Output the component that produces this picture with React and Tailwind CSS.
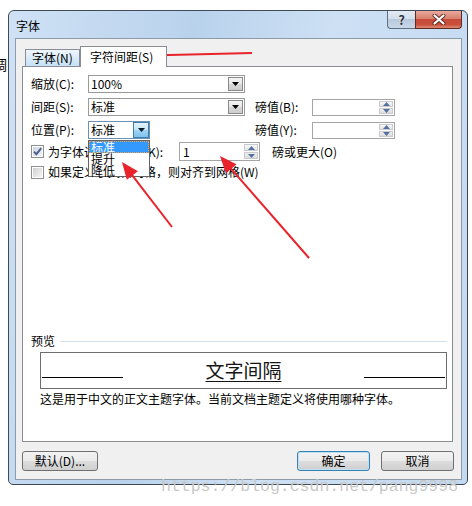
import React from "react";

function Tri({ dir = "down", color = "#000", w = 7, h = 4 }) {
  const pts = dir === "down" ? `0,0 ${w},0 ${w / 2},${h}` : `0,${h} ${w},${h} ${w / 2},0`;
  return (
    <svg width={w} height={h} viewBox={`0 0 ${w} ${h}`}>
      <polygon points={pts} fill={color} />
    </svg>
  );
}

function Combo({ wClass, value, active }) {
  return (
    <div className={`flex h-[18px] border bg-white ${wClass} ${active ? "border-[#6d8fb3]" : "border-[#9a9a9a]"}`}>
      <div className="flex-1 pl-[2px] leading-[16px] overflow-hidden whitespace-nowrap">{value}</div>
      {active ? (
        <div className="w-[16px] h-full border border-[#3c7fb1] bg-[linear-gradient(#e3f3fc,#c4e5f8_50%,#9fd4f3_51%,#7fc2ec)] flex items-center justify-center">
          <Tri color="#0d1a2a" />
        </div>
      ) : (
        <div className="w-[15px] m-[1px] border border-[#8a8a8a] bg-[linear-gradient(#f4f4f4,#e8e8e8_50%,#d8d8d8_51%,#cdcdcd)] flex items-center justify-center">
          <Tri color="#000" />
        </div>
      )}
    </div>
  );
}

function Spin({ wClass, hClass, value }) {
  return (
    <div className={`flex border border-[#a5a5a5] bg-white ${wClass} ${hClass}`}>
      <div className="flex-1 pl-[3px] flex items-center leading-[14px]">{value}</div>
      <div className="w-[14px] m-[1px] flex flex-col gap-[1px]">
        <div className="flex-1 border border-[#c9cbcf] bg-[linear-gradient(#f7f7f7,#e4e4e4)] flex items-center justify-center">
          <Tri dir="up" color="#5671a0" w={7} h={4} />
        </div>
        <div className="flex-1 border border-[#c9cbcf] bg-[linear-gradient(#f0f0f0,#dcdcdc)] flex items-center justify-center">
          <Tri dir="down" color="#5671a0" w={7} h={4} />
        </div>
      </div>
    </div>
  );
}

function Check({ checked }) {
  return (
    <div className="w-[13px] h-[13px] shrink-0 border border-[#8e8f8f] bg-white p-[1px]">
      <div className={`w-full h-full flex items-center justify-center ${checked ? "bg-[linear-gradient(135deg,#cfd6e2,#eef1f6)]" : "bg-[linear-gradient(135deg,#d0d0d0,#f6f6f6)]"}`}>
        {checked && (
          <svg width="9" height="9" viewBox="0 0 9 9">
            <path d="M1 4.6 L3.4 7.2 L8.2 1.2" stroke="#4b5f92" strokeWidth="1.9" fill="none" />
          </svg>
        )}
      </div>
    </div>
  );
}

function arrow(x1, y1, x2, y2, len = 17, half = 7) {
  const dx = x2 - x1;
  const dy = y2 - y1;
  const d = Math.hypot(dx, dy);
  const ux = dx / d;
  const uy = dy / d;
  const bx = x2 - ux * len;
  const by = y2 - uy * len;
  const px = -uy * half;
  const py = ux * half;
  return (
    <g key={`${x1}-${y1}`}>
      <line x1={x1} y1={y1} x2={bx + ux * 2} y2={by + uy * 2} stroke="#e8232b" strokeWidth="2" />
      <polygon points={`${x2},${y2} ${bx + px},${by + py} ${bx - px},${by - py}`} fill="#e8232b" />
    </g>
  );
}

export default function App() {
  const btn =
    "h-[20px] rounded-[3px] border text-[12px] leading-[18px] flex items-center justify-center";
  return (
    <div className="relative w-[472px] h-[506px] overflow-hidden bg-white pt-[10px] pl-[8px] text-[12px] leading-[14px] text-black font-['Noto_Sans_CJK_SC',sans-serif]">
      <span className="absolute left-[-7px] top-[57px] text-[14px] leading-[14px]">调</span>

      <div className="w-[460px] h-[475px] border border-[#3f4a56] rounded-t-[6px] rounded-b-[5px] bg-[linear-gradient(100deg,#cfe1f5,#b9d2ec_35%,#cde0f4_60%,#c3d9f1)] flex flex-col">
        {/* Title bar */}
        <div className="h-[27px] flex items-start shrink-0">
          <span className="pl-[7px] pt-[9px] leading-[12px] text-[12px]">字体</span>
          <div className="ml-auto mr-[5px] flex">
            <div className="w-[28px] h-[18px] border border-t-0 border-r-0 border-[#5f6f82] rounded-bl-[4px] bg-[linear-gradient(#e3ebf4,#d3dfec_45%,#b8c9dc_50%,#c9d8e8)] flex items-center justify-center">
              <span className="text-[13px] font-bold leading-[14px] text-[#2a3340] [text-shadow:0_0_1px_#fff,0_0_1px_#fff]">?</span>
            </div>
            <div className="w-[47px] h-[18px] border border-t-0 border-[#5a2a23] rounded-br-[4px] bg-[linear-gradient(#e9a99c,#d98170_45%,#c74a38_50%,#c9503c_80%,#e08b70)] flex items-center justify-center">
              <svg width="14" height="11" viewBox="0 0 14 11">
                <path d="M2.5 1.5 L11.5 9.5 M11.5 1.5 L2.5 9.5" stroke="#5b2a22" strokeWidth="4" strokeLinecap="round" />
                <path d="M2.5 1.5 L11.5 9.5 M11.5 1.5 L2.5 9.5" stroke="#ffffff" strokeWidth="2.2" strokeLinecap="round" />
              </svg>
            </div>
          </div>
        </div>

        {/* Client area */}
        <div className="flex-1 ml-[6px] mr-[5px] mb-[4px] border border-[#8d9aa8] bg-[#f0f0f0] flex flex-col">
          {/* Tabs */}
          <div className="mt-[7px] ml-[9px] h-[20px] flex items-end relative z-10">
            <div className="w-[55px] h-[17px] border border-b-0 border-[#898c95] bg-[linear-gradient(#eef6fd,#d9ebf9_50%,#c6e1f6)] flex items-center pl-[6px] leading-[12px]">
              字体(N)
            </div>
            <div className="w-[87px] h-[21px] -mb-[1px] border border-b-0 border-[#898c95] bg-white flex items-center pl-[9px] leading-[12px]">
              字符间距(S)
            </div>
          </div>

          {/* Panel */}
          <div className="ml-[6px] w-[431px] h-[376px] border border-[#898c95] bg-white flex flex-col pl-[8px]">
            <div className="mt-[8px] h-[18px] flex items-center">
              <span className="w-[57px] leading-[12px]">缩放(C):</span>
              <Combo wClass="w-[157px]" value="100%" />
            </div>
            <div className="mt-[5px] h-[18px] flex items-center">
              <span className="w-[57px] leading-[12px]">间距(S):</span>
              <Combo wClass="w-[157px]" value="标准" />
              <span className="ml-[10px] w-[57px] leading-[12px]">磅值(B):</span>
              <Spin wClass="w-[83px]" hClass="h-[17px]" value="" />
            </div>
            <div className="mt-[5px] h-[18px] flex items-center">
              <span className="w-[57px] leading-[12px]">位置(P):</span>
              <Combo wClass="w-[62px]" value="标准" active />
              <span className="ml-[105px] w-[57px] leading-[12px]">磅值(Y):</span>
              <Spin wClass="w-[83px]" hClass="h-[17px]" value="" />
            </div>
            <div className="mt-[3px] h-[19px] flex items-center">
              <Check checked />
              <span className="ml-[4px] w-[131px] leading-[12px] whitespace-nowrap">为字体调整字间距(K):</span>
              <Spin wClass="w-[81px]" hClass="h-[19px]" value="1" />
              <span className="ml-[12px] leading-[12px]">磅或更大(O)</span>
            </div>
            <div className="mt-[4px] h-[14px] flex items-center">
              <Check />
              <span className="ml-[4px] leading-[12px] whitespace-nowrap">如果定义了文档网格，则对齐到网格(W)</span>
            </div>

            {/* Preview */}
            <div className="mt-[156px] h-[12px] flex items-center pr-[5px]">
              <span className="leading-[12px]">预览</span>
              <div className="flex-1 ml-[5px] h-px bg-[#d5dfe8]" />
            </div>
            <div className="mt-[5px] ml-[9px] w-[407px] h-[37px] border border-[#6e6e6e] flex items-end justify-between px-px">
              <div className="w-[81px] h-px bg-black mb-[10px]" />
              <span className="mb-[9px] text-[19px] leading-[19px] underline decoration-1 underline-offset-[3px] text-[#141414]">
                文字间隔
              </span>
              <div className="w-[81px] h-px bg-black mb-[10px]" />
            </div>
            <div className="mt-[4px] ml-[9px] leading-[12px] whitespace-nowrap">
              这是用于中文的正文主题字体。当前文档主题定义将使用哪种字体。
            </div>
          </div>

          {/* Buttons */}
          <div className="mt-[9px] ml-[6px] mr-[7px] flex">
            <div className={`${btn} w-[76px] border-[#707070] bg-[linear-gradient(#f2f2f2,#ebebeb_50%,#dddddd_51%,#cfcfcf)]`}>
              默认(D)...
            </div>
            <div className={`${btn} ml-auto w-[73px] border-[#3c7fb1] shadow-[inset_0_0_0_1px_#b6e3fa] bg-[linear-gradient(#f2f2f2,#ebebeb_50%,#dddddd_51%,#cfcfcf)]`}>
              确定
            </div>
            <div className={`${btn} ml-[11px] w-[73px] border-[#707070] bg-[linear-gradient(#f2f2f2,#ebebeb_50%,#dddddd_51%,#cfcfcf)]`}>
              取消
            </div>
          </div>
        </div>
      </div>

      {/* Open dropdown list */}
      <div className="absolute left-[88px] top-[140px] w-[62px] h-[37px] border border-[#646464] bg-white flex flex-col">
        <div className="h-[12px] bg-[#3399ff] text-white pl-[2px] leading-[12px] outline-1 outline-dotted outline-[#f0a040] -outline-offset-1">标准</div>
        <div className="h-[12px] pl-[2px] leading-[12px]">提升</div>
        <div className="h-[11px] pl-[2px] leading-[12px]">降低</div>
      </div>

      {/* Red arrows */}
      <svg className="absolute left-0 top-0 pointer-events-none" width="472" height="506" viewBox="0 0 472 506">
        {arrow(252, 53, 134, 56)}
        {arrow(172, 227, 122, 162)}
        {arrow(309, 258, 220, 156)}
      </svg>

      {/* Watermark */}
      <span className="absolute left-[161px] top-[478px] text-[16.5px] leading-[17px] font-['Liberation_Mono',monospace] text-[#c8c8c8] whitespace-nowrap">
        https://blog.csdn.net/pang9998
      </span>
    </div>
  );
}
